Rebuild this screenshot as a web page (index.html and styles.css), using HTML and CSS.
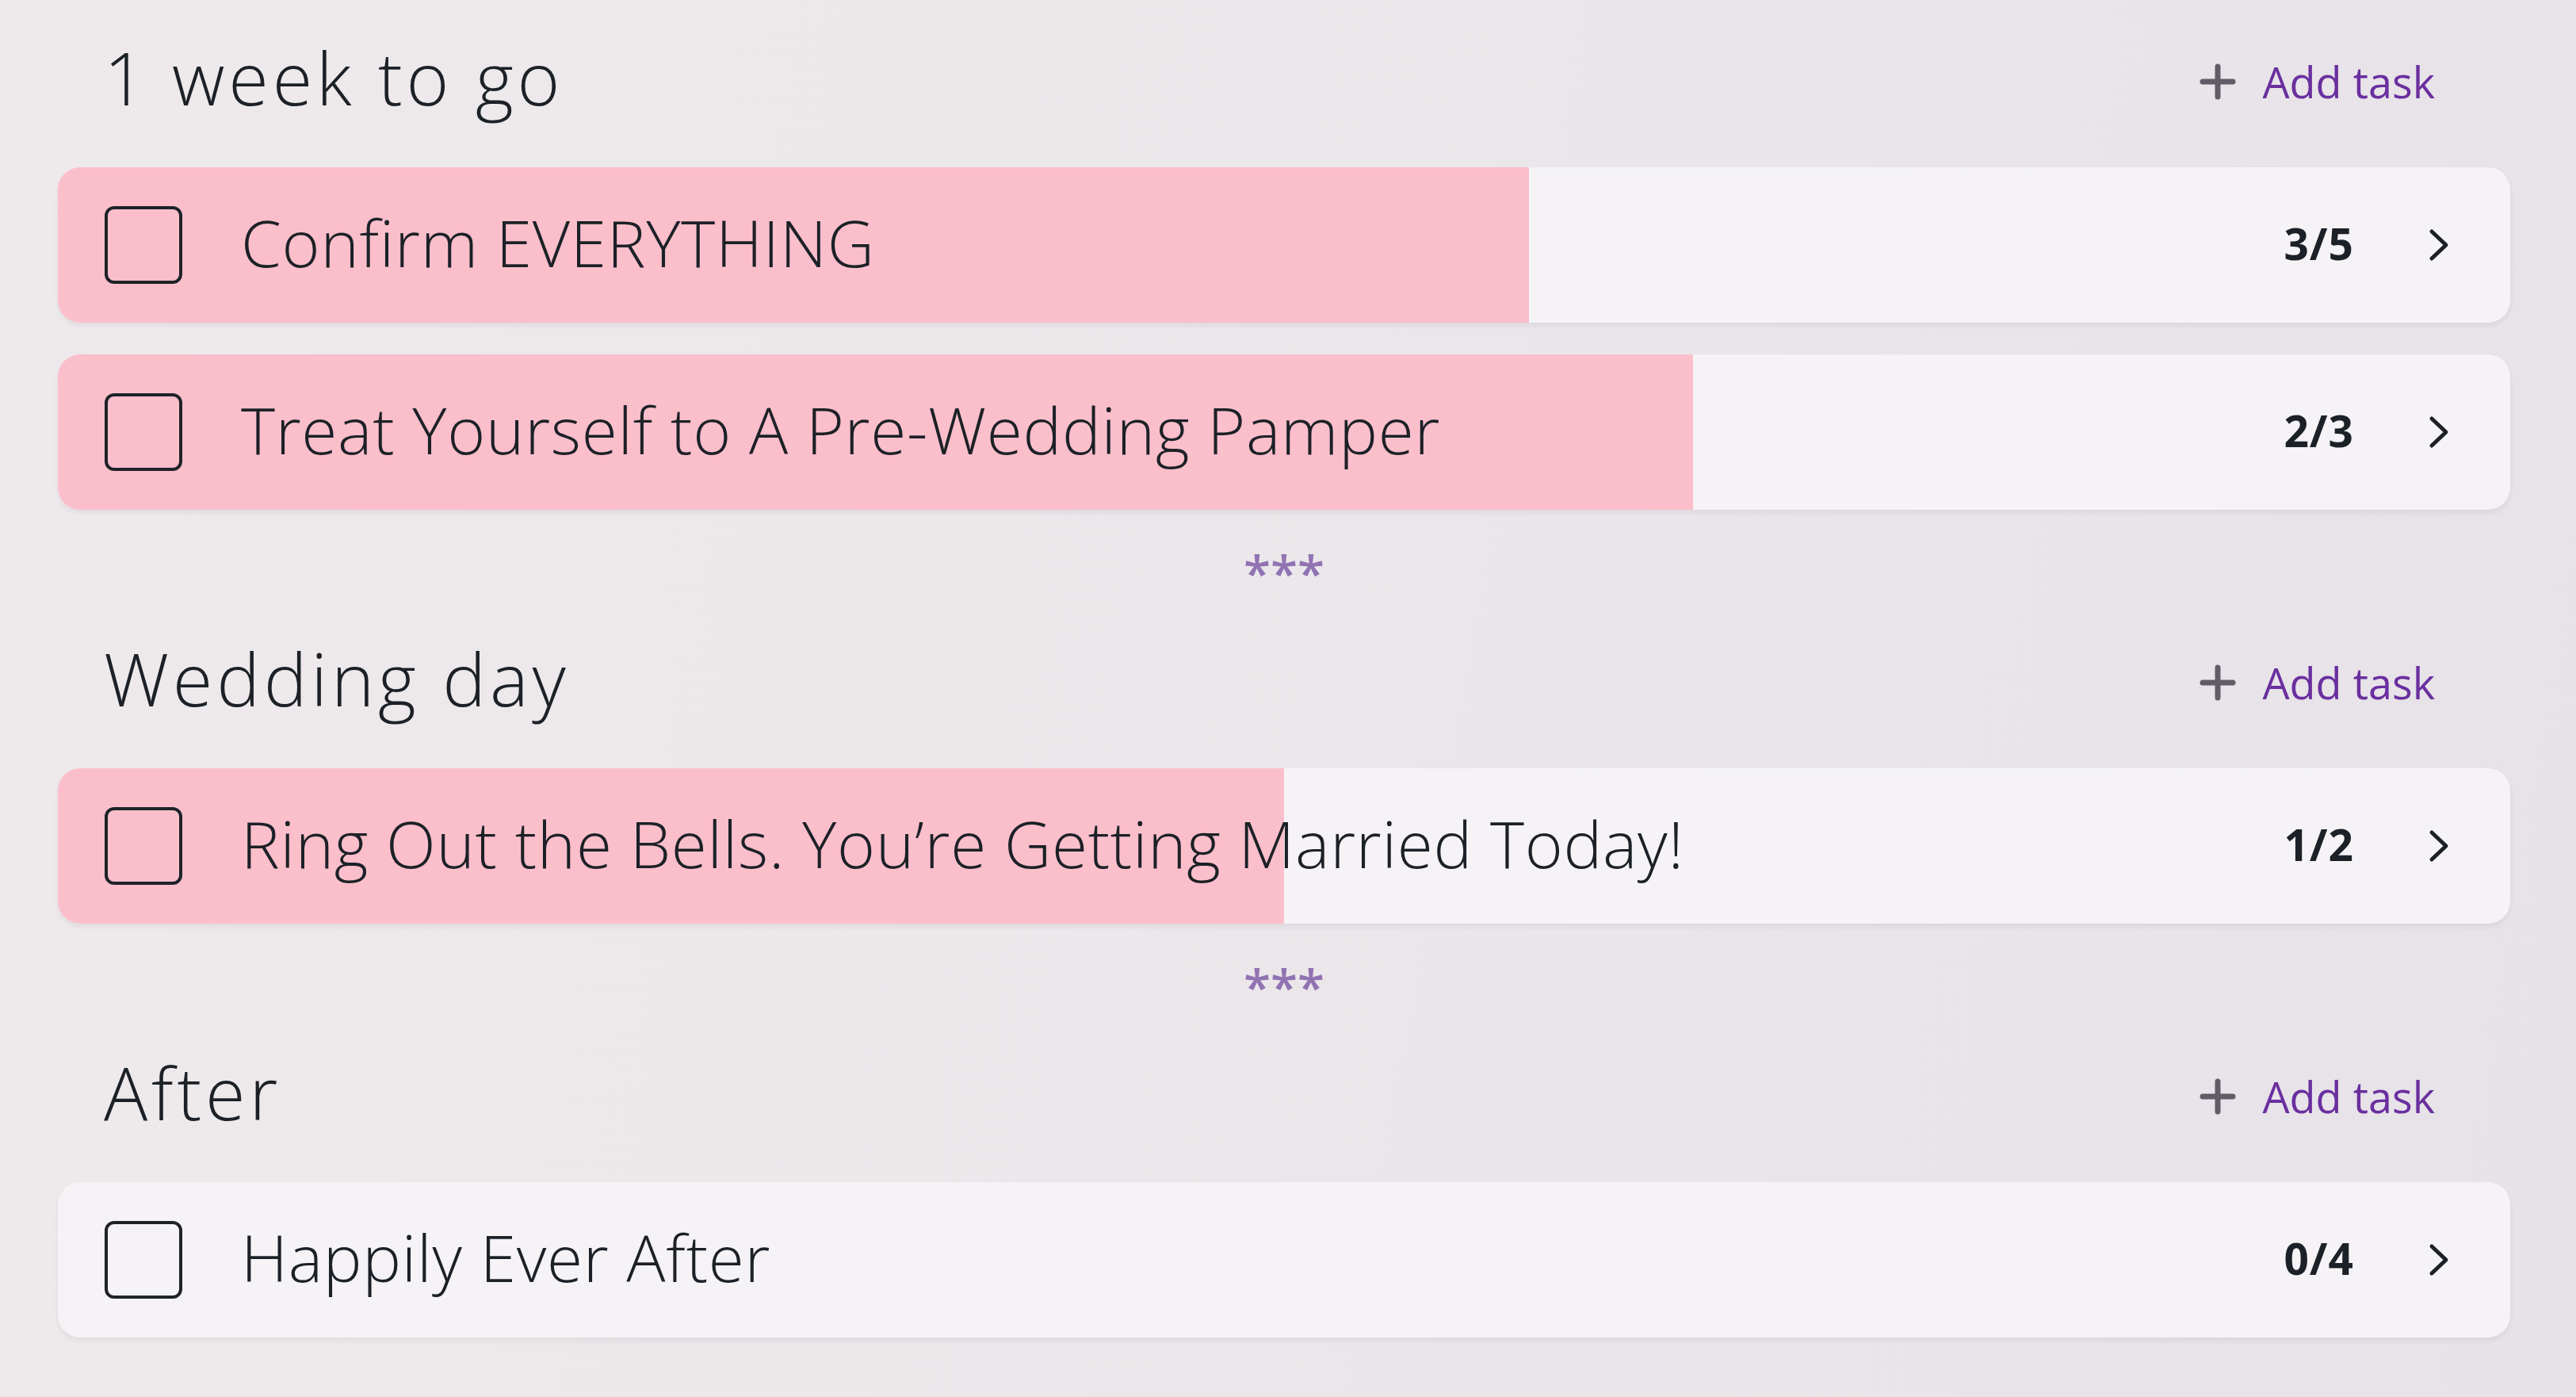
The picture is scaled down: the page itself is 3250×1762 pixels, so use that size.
FILE: index.html
```html
<!DOCTYPE html>
<html lang="en">
<head>
<meta charset="utf-8">
<title>Tasks</title>
<link rel="stylesheet" href="styles.css">
</head>
<body>
<main class="page">
  <section class="group">
    <header class="group-head">
      <h2 class="group-title">1 week to go</h2>
      <button class="add-task" type="button">
        <svg class="plus" viewBox="0 0 46 46" width="46" height="46"><path d="M23 4V42M4 23H42"/></svg>
        <span>Add task</span>
      </button>
    </header>
    <ul class="tasks">
      <li class="task">
        <div class="progress" style="width:60%"></div>
        <span class="check"></span>
        <span class="task-name">Confirm EVERYTHING</span>
        <span class="count">3/5</span>
        <svg class="chev" viewBox="0 0 30 44" width="30" height="44"><path d="M6 5L24 22L6 39"/></svg>
      </li>
      <li class="task">
        <div class="progress" style="width:66.667%"></div>
        <span class="check"></span>
        <span class="task-name">Treat Yourself to A Pre-Wedding Pamper</span>
        <span class="count">2/3</span>
        <svg class="chev" viewBox="0 0 30 44" width="30" height="44"><path d="M6 5L24 22L6 39"/></svg>
      </li>
    </ul>
  </section>
  <div class="divider">***</div>
  <section class="group">
    <header class="group-head">
      <h2 class="group-title">Wedding day</h2>
      <button class="add-task" type="button">
        <svg class="plus" viewBox="0 0 46 46" width="46" height="46"><path d="M23 4V42M4 23H42"/></svg>
        <span>Add task</span>
      </button>
    </header>
    <ul class="tasks">
      <li class="task">
        <div class="progress" style="width:50%"></div>
        <span class="check"></span>
        <span class="task-name">Ring Out the Bells. You’re Getting Married Today!</span>
        <span class="count">1/2</span>
        <svg class="chev" viewBox="0 0 30 44" width="30" height="44"><path d="M6 5L24 22L6 39"/></svg>
      </li>
    </ul>
  </section>
  <div class="divider">***</div>
  <section class="group">
    <header class="group-head">
      <h2 class="group-title">After</h2>
      <button class="add-task" type="button">
        <svg class="plus" viewBox="0 0 46 46" width="46" height="46"><path d="M23 4V42M4 23H42"/></svg>
        <span>Add task</span>
      </button>
    </header>
    <ul class="tasks">
      <li class="task">
        <div class="progress" style="width:0%"></div>
        <span class="check"></span>
        <span class="task-name">Happily Ever After</span>
        <span class="count">0/4</span>
        <svg class="chev" viewBox="0 0 30 44" width="30" height="44"><path d="M6 5L24 22L6 39"/></svg>
      </li>
    </ul>
  </section>
</main>
</body>
</html>
```

FILE: styles.css
```css
html, body {
  margin: 0;
  padding: 0;
}

body {
  width: 3250px;
  height: 1762px;
  overflow: hidden;
  background: linear-gradient(100deg, #eeeaec 0%, #ebe7ea 45%, #e6e2e8 100%);
  font-family: "Open Sans", "Noto Sans", sans-serif;
  color: #1c2127;
}

.page {
  padding: 0 83px 0 73px;
}

.group-head {
  height: 196px;
  display: flex;
  align-items: center;
  justify-content: space-between;
  padding: 0 95px 0 58px;
  margin-bottom: 15px;
}

.group-title {
  margin: 0;
  font-size: 92px;
  font-weight: 300;
  letter-spacing: 4.8px;
  line-height: 1;
}

.add-task {
  display: flex;
  align-items: center;
  gap: 33px;
  border: 0;
  background: none;
  padding: 0;
  margin-top: 10px;
  font-family: inherit;
  font-size: 54px;
  font-weight: 400;
  color: #6a2f9f;
}

.plus {
  display: block;
  fill: none;
  stroke: #625c67;
  stroke-width: 7;
  stroke-linecap: round;
}

.tasks {
  list-style: none;
  margin: 0;
  padding: 0;
  display: flex;
  flex-direction: column;
  gap: 40px;
}

.task {
  position: relative;
  height: 196px;
  display: flex;
  align-items: center;
  padding: 0 75px 0 59px;
  border-radius: 28px;
  background: #f5f3f6;
  overflow: hidden;
  box-shadow: 0 4px 6px rgba(60, 40, 70, 0.07);
}

.progress {
  position: absolute;
  left: 0;
  top: 0;
  bottom: 0;
  background: #fbbfcb;
}

.check {
  position: relative;
  box-sizing: border-box;
  width: 98px;
  height: 98px;
  border: 4.5px solid #1e2328;
  border-radius: 12px;
  flex: none;
}

.task-name {
  position: relative;
  margin-left: 74px;
  padding-bottom: 8px;
  flex: 1;
  font-size: 82px;
  font-weight: 300;
  letter-spacing: 0.7px;
  white-space: nowrap;
}

.count {
  position: relative;
  padding-bottom: 6px;
  font-size: 55px;
  font-weight: 700;
  letter-spacing: 1px;
}

.chev {
  position: relative;
  display: block;
  margin-left: 92px;
  fill: none;
  stroke: #1c2127;
  stroke-width: 5;
  stroke-linecap: round;
  stroke-linejoin: round;
}

.divider {
  height: 115px;
  box-sizing: border-box;
  padding-top: 48px;
  text-align: center;
  font-size: 62px;
  font-weight: 600;
  line-height: 1;
  color: #9173b3;
  letter-spacing: 0;
}
```
